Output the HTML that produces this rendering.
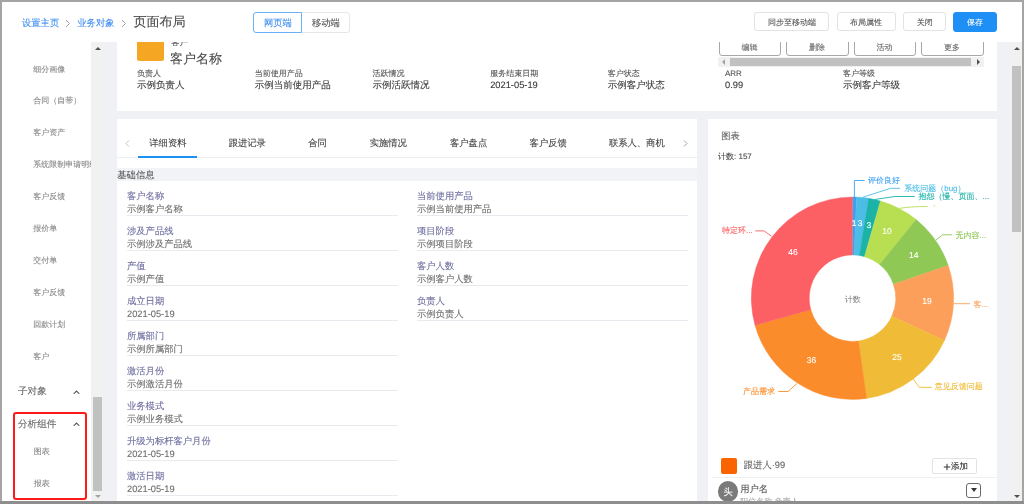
<!DOCTYPE html>
<html><head><meta charset="utf-8">
<style>
*{box-sizing:border-box;margin:0;padding:0}
html,body{width:1024px;height:504px;overflow:hidden;background:#fff;font-family:"Liberation Sans",sans-serif;position:relative;text-rendering:geometricPrecision}
.a{position:absolute;white-space:nowrap;line-height:1;-webkit-text-stroke-width:0.1px}
.btn{position:absolute;border:1px solid #e3e3e3;border-radius:3px;background:#fff}
.hl{position:absolute;height:1px;background:#e8eaf0}
#wrap{position:absolute;left:0;top:0;width:1024px;height:504px;will-change:transform;filter:blur(0.3px);overflow:hidden;background:#fff}
</style></head><body><div id="wrap">

<div class="a" style="left:22px;top:18.80px;font-size:9.3px;color:#3f8ef0;">设置主页</div>
<div class="a" style="left:77.3px;top:18.80px;font-size:9.3px;color:#3f8ef0;">业务对象</div>
<svg class="a" style="left:64.5px;top:18.7px" width="6" height="9" viewBox="0 0 6 9"><path d="M1 1L4.5 4.5L1 8" fill="none" stroke="#a0a0a0" stroke-width="1"/></svg>
<svg class="a" style="left:120.5px;top:18.7px" width="6" height="9" viewBox="0 0 6 9"><path d="M1 1L4.5 4.5L1 8" fill="none" stroke="#a0a0a0" stroke-width="1"/></svg>
<div class="a" style="left:133.5px;top:14.70px;font-size:13px;color:#4a4a4a;">页面布局</div>
<div class="btn" style="left:301px;top:11.5px;width:49px;height:21px;border-color:#e6e6e6;border-radius:0 3px 3px 0"></div>
<div class="btn" style="left:253px;top:11.5px;width:49px;height:21px;border-color:#69b0f7;border-radius:3px 0 0 3px"></div>
<div class="a" style="left:264px;top:18.80px;font-size:9.3px;color:#3f8ef0;">网页端</div>
<div class="a" style="left:312px;top:18.80px;font-size:9.3px;color:#555;">移动端</div>
<div class="btn" style="left:754.4px;top:12.4px;width:75.1px;height:19px"></div>
<div class="a" style="left:768px;top:19.00px;font-size:8px;color:#555;">同步至移动端</div>
<div class="btn" style="left:836.5px;top:12.4px;width:59.8px;height:19px"></div>
<div class="a" style="left:850px;top:19.00px;font-size:8px;color:#555;">布局属性</div>
<div class="btn" style="left:903px;top:12.4px;width:43.4px;height:19px"></div>
<div class="a" style="left:916.7px;top:19.00px;font-size:8px;color:#555;">关闭</div>
<div class="btn" style="left:953.2px;top:12.2px;width:44.2px;height:19.6px;background:#1d8ff5;border-color:#1d8ff5"></div>
<div class="a" style="left:967px;top:19.00px;font-size:8px;color:#fff;">保存</div>
<div class="a" style="left:103px;top:42px;width:919px;height:460px;background:#f0f1f4"></div>
<div class="a" style="left:91px;top:42px;width:12px;height:460px;background:#f1f1f1"></div>
<div class="a" style="left:93px;top:397px;width:9px;height:94px;background:#c1c1c1"></div>
<div class="a" style="left:94.5px;top:47px;width:0;height:0;border-left:3px solid transparent;border-right:3px solid transparent;border-bottom:3px solid #505050"></div>
<div class="a" style="left:94.5px;top:495px;width:0;height:0;border-left:3px solid transparent;border-right:3px solid transparent;border-top:3px solid #a3a3a3"></div>
<div class="a" style="left:2px;top:42px;width:89px;height:460px;overflow:hidden">
<div class="a" style="left:31.3px;top:23.50px;font-size:8px;color:#888;">细分画像</div>
<div class="a" style="left:31.3px;top:55.40px;font-size:8px;color:#888;">合同（自带）</div>
<div class="a" style="left:31.3px;top:87.30px;font-size:8px;color:#888;">客户资产</div>
<div class="a" style="left:31.3px;top:119.20px;font-size:8px;color:#888;">系统限制申请明细</div>
<div class="a" style="left:31.3px;top:151.10px;font-size:8px;color:#888;">客户反馈</div>
<div class="a" style="left:31.3px;top:183.00px;font-size:8px;color:#888;">报价单</div>
<div class="a" style="left:31.3px;top:214.90px;font-size:8px;color:#888;">交付单</div>
<div class="a" style="left:31.3px;top:246.80px;font-size:8px;color:#888;">客户反馈</div>
<div class="a" style="left:31.3px;top:278.70px;font-size:8px;color:#888;">回款计划</div>
<div class="a" style="left:31.3px;top:310.60px;font-size:8px;color:#888;">客户</div>
<div class="a" style="left:16px;top:345.30px;font-size:9.6px;color:#666;">子对象</div>
<div class="a" style="left:16px;top:377.90px;font-size:9.6px;color:#666;">分析组件</div>
<div class="a" style="left:31.7px;top:406.00px;font-size:8px;color:#888;">图表</div>
<div class="a" style="left:31.7px;top:437.50px;font-size:8px;color:#888;">报表</div>
</div>
<svg class="a" style="left:73px;top:389.8px" width="7" height="4.5" viewBox="0 0 7 4.5"><path d="M0.7 3.8L3.5 1L6.3 3.8" fill="none" stroke="#555" stroke-width="1.1"/></svg>
<svg class="a" style="left:73px;top:421.5px" width="7" height="4.5" viewBox="0 0 7 4.5"><path d="M0.7 3.8L3.5 1L6.3 3.8" fill="none" stroke="#555" stroke-width="1.1"/></svg>
<div class="a" style="left:13px;top:411.7px;width:74px;height:88px;border:2px solid #ff1a1a;border-radius:3px"></div>
<div class="a" style="left:117px;top:42px;width:880px;height:69px;background:#fff;overflow:hidden">
<div class="a" style="left:20px;top:-8px;width:26.6px;height:26.7px;background:#f5a623;border-radius:2.5px"></div>
<div class="a" style="left:54px;top:-4.00px;font-size:8.5px;color:#555;">客户</div>
<div class="a" style="left:53px;top:9.50px;font-size:13px;color:#4a4a4a;">客户名称</div>
<div class="a" style="left:20px;top:28.00px;font-size:8px;color:#555;">负责人</div>
<div class="a" style="left:20px;top:39.40px;font-size:9.5px;color:#3a3a3a;">示例负责人</div>
<div class="a" style="left:137.7px;top:28.00px;font-size:8px;color:#555;">当前使用产品</div>
<div class="a" style="left:137.7px;top:39.40px;font-size:9.5px;color:#3a3a3a;">示例当前使用产品</div>
<div class="a" style="left:255.5px;top:28.00px;font-size:8px;color:#555;">活跃情况</div>
<div class="a" style="left:255.5px;top:39.40px;font-size:9.5px;color:#3a3a3a;">示例活跃情况</div>
<div class="a" style="left:373.2px;top:28.00px;font-size:8px;color:#555;">服务结束日期</div>
<div class="a" style="left:373.2px;top:39.20px;font-size:9.3px;color:#3a3a3a;">2021-05-19</div>
<div class="a" style="left:490.70000000000005px;top:28.00px;font-size:8px;color:#555;">客户状态</div>
<div class="a" style="left:490.70000000000005px;top:39.40px;font-size:9.5px;color:#3a3a3a;">示例客户状态</div>
<div class="a" style="left:608px;top:28.00px;font-size:8px;color:#555;">ARR</div>
<div class="a" style="left:608px;top:39.20px;font-size:9.3px;color:#3a3a3a;">0.99</div>
<div class="a" style="left:726px;top:28.00px;font-size:8px;color:#555;">客户等级</div>
<div class="a" style="left:726px;top:39.40px;font-size:9.5px;color:#3a3a3a;">示例客户等级</div>
<div class="btn" style="left:601.5px;top:-6px;width:62.5px;height:19.5px;border-color:#a8a8a8;border-radius:0 0 3px 3px"></div>
<div class="a" style="left:624.5px;top:2.10px;font-size:8px;color:#666;">编辑</div>
<div class="btn" style="left:669.0px;top:-6px;width:62.5px;height:19.5px;border-color:#a8a8a8;border-radius:0 0 3px 3px"></div>
<div class="a" style="left:692.0px;top:2.10px;font-size:8px;color:#666;">删除</div>
<div class="btn" style="left:736.5px;top:-6px;width:62.5px;height:19.5px;border-color:#a8a8a8;border-radius:0 0 3px 3px"></div>
<div class="a" style="left:759.5px;top:2.10px;font-size:8px;color:#666;">活动</div>
<div class="btn" style="left:804.0px;top:-6px;width:62.5px;height:19.5px;border-color:#a8a8a8;border-radius:0 0 3px 3px"></div>
<div class="a" style="left:827.0px;top:2.10px;font-size:8px;color:#666;">更多</div>
<div class="a" style="left:601px;top:14.5px;width:266px;height:10px;background:#f1f1f1"></div>
<div class="a" style="left:612.5px;top:15.5px;width:241px;height:8px;background:#c1c1c1"></div>
<div class="a" style="left:605px;top:16.5px;width:0;height:0;border-top:3px solid transparent;border-bottom:3px solid transparent;border-right:3px solid #a3a3a3"></div>
<div class="a" style="left:859.5px;top:16.5px;width:0;height:0;border-top:3px solid transparent;border-bottom:3px solid transparent;border-left:3px solid #505050"></div>
</div>
<div class="a" style="left:117px;top:118.8px;width:579.5px;height:384px;background:#fff;overflow:hidden">
<svg class="a" style="left:8px;top:21.5px" width="5" height="7" viewBox="0 0 5 7"><path d="M4 0.5L1 3.5L4 6.5" fill="none" stroke="#bbb" stroke-width="0.9"/></svg>
<svg class="a" style="left:566px;top:21.3px" width="5" height="7" viewBox="0 0 5 7"><path d="M1 0.5L4 3.5L1 6.5" fill="none" stroke="#999" stroke-width="0.9"/></svg>
<div class="a" style="left:32.30000000000001px;top:20.20px;font-size:9.3px;color:#444;">详细资料</div>
<div class="a" style="left:111.69999999999999px;top:20.20px;font-size:9.3px;color:#444;">跟进记录</div>
<div class="a" style="left:191.3px;top:20.20px;font-size:9.3px;color:#444;">合同</div>
<div class="a" style="left:252.7px;top:20.20px;font-size:9.3px;color:#444;">实施情况</div>
<div class="a" style="left:333px;top:20.20px;font-size:9.3px;color:#444;">客户盘点</div>
<div class="a" style="left:412.6px;top:20.20px;font-size:9.3px;color:#444;">客户反馈</div>
<div class="a" style="left:491.9px;top:20.20px;font-size:9.3px;color:#444;">联系人、商机</div>
<div class="a" style="left:0;top:38.3px;width:580px;height:1px;background:#eceef2"></div>
<div class="a" style="left:21px;top:37.4px;width:59px;height:2.1px;background:#1d8ff5"></div>
<div class="a" style="left:0;top:49.6px;width:580px;height:12.8px;background:#f2f3f7"></div>
<div class="a" style="left:0.3px;top:52.40px;font-size:9.3px;color:#555;">基础信息</div>
<div class="a" style="left:10px;top:73.00px;font-size:9.3px;color:#6f6ea0;">客户名称</div>
<div class="a" style="left:10px;top:86.30px;font-size:9.3px;color:#6e6e6e;">示例客户名称</div>
<div class="hl" style="left:10px;top:96.2px;width:270.5px"></div>
<div class="a" style="left:10px;top:108.00px;font-size:9.3px;color:#6f6ea0;">涉及产品线</div>
<div class="a" style="left:10px;top:121.30px;font-size:9.3px;color:#6e6e6e;">示例涉及产品线</div>
<div class="hl" style="left:10px;top:131.2px;width:270.5px"></div>
<div class="a" style="left:10px;top:143.00px;font-size:9.3px;color:#6f6ea0;">产值</div>
<div class="a" style="left:10px;top:156.30px;font-size:9.3px;color:#6e6e6e;">示例产值</div>
<div class="hl" style="left:10px;top:166.2px;width:270.5px"></div>
<div class="a" style="left:10px;top:178.00px;font-size:9.3px;color:#6f6ea0;">成立日期</div>
<div class="a" style="left:10px;top:191.30px;font-size:9.3px;color:#6e6e6e;">2021-05-19</div>
<div class="hl" style="left:10px;top:201.2px;width:270.5px"></div>
<div class="a" style="left:10px;top:213.00px;font-size:9.3px;color:#6f6ea0;">所属部门</div>
<div class="a" style="left:10px;top:226.30px;font-size:9.3px;color:#6e6e6e;">示例所属部门</div>
<div class="hl" style="left:10px;top:236.2px;width:270.5px"></div>
<div class="a" style="left:10px;top:248.00px;font-size:9.3px;color:#6f6ea0;">激活月份</div>
<div class="a" style="left:10px;top:261.30px;font-size:9.3px;color:#6e6e6e;">示例激活月份</div>
<div class="hl" style="left:10px;top:271.2px;width:270.5px"></div>
<div class="a" style="left:10px;top:283.00px;font-size:9.3px;color:#6f6ea0;">业务模式</div>
<div class="a" style="left:10px;top:296.30px;font-size:9.3px;color:#6e6e6e;">示例业务模式</div>
<div class="hl" style="left:10px;top:306.2px;width:270.5px"></div>
<div class="a" style="left:10px;top:318.00px;font-size:9.3px;color:#6f6ea0;">升级为标杆客户月份</div>
<div class="a" style="left:10px;top:331.30px;font-size:9.3px;color:#6e6e6e;">2021-05-19</div>
<div class="hl" style="left:10px;top:341.2px;width:270.5px"></div>
<div class="a" style="left:10px;top:353.00px;font-size:9.3px;color:#6f6ea0;">激活日期</div>
<div class="a" style="left:10px;top:366.30px;font-size:9.3px;color:#6e6e6e;">2021-05-19</div>
<div class="hl" style="left:10px;top:376.2px;width:270.5px"></div>
<div class="a" style="left:300px;top:73.00px;font-size:9.3px;color:#6f6ea0;">当前使用产品</div>
<div class="a" style="left:300px;top:86.30px;font-size:9.3px;color:#6e6e6e;">示例当前使用产品</div>
<div class="hl" style="left:300px;top:96.2px;width:271px"></div>
<div class="a" style="left:300px;top:108.00px;font-size:9.3px;color:#6f6ea0;">项目阶段</div>
<div class="a" style="left:300px;top:121.30px;font-size:9.3px;color:#6e6e6e;">示例项目阶段</div>
<div class="hl" style="left:300px;top:131.2px;width:271px"></div>
<div class="a" style="left:300px;top:143.00px;font-size:9.3px;color:#6f6ea0;">客户人数</div>
<div class="a" style="left:300px;top:156.30px;font-size:9.3px;color:#6e6e6e;">示例客户人数</div>
<div class="hl" style="left:300px;top:166.2px;width:271px"></div>
<div class="a" style="left:300px;top:178.00px;font-size:9.3px;color:#6f6ea0;">负责人</div>
<div class="a" style="left:300px;top:191.30px;font-size:9.3px;color:#6e6e6e;">示例负责人</div>
<div class="hl" style="left:300px;top:201.2px;width:271px"></div>
</div>
<div class="a" style="left:707.5px;top:118.8px;width:289.6px;height:384px;background:#fff"></div>
<div class="a" style="left:721.2px;top:132.20px;font-size:9.3px;color:#666;">图表</div>
<div class="a" style="left:718px;top:153.00px;font-size:8px;color:#4a4a4a;">计数: 157</div>
<svg class="a" style="left:0;top:0" width="1024" height="504" viewBox="0 0 1024 504"><path d="M852.50 197.00A101.2 101.2 0 0 1 856.55 197.08L854.23 255.03A43.2 43.2 0 0 0 852.50 255.00Z" fill="#3aa1f5" stroke="#3aa1f5" stroke-width="0.4"/><path d="M856.55 197.08A101.2 101.2 0 0 1 868.63 198.29L859.39 255.55A43.2 43.2 0 0 0 854.23 255.03Z" fill="#4bbde6" stroke="#4bbde6" stroke-width="0.4"/><path d="M868.63 198.29A101.2 101.2 0 0 1 880.48 200.95L864.44 256.68A43.2 43.2 0 0 0 859.39 255.55Z" fill="#1bb3a7" stroke="#1bb3a7" stroke-width="0.4"/><path d="M880.48 200.95A101.2 101.2 0 0 1 916.16 219.53L879.68 264.62A43.2 43.2 0 0 0 864.44 256.68Z" fill="#b8de52" stroke="#b8de52" stroke-width="0.4"/><path d="M916.16 219.53A101.2 101.2 0 0 1 948.23 265.39L893.37 284.19A43.2 43.2 0 0 0 879.68 264.62Z" fill="#8fc855" stroke="#8fc855" stroke-width="0.4"/><path d="M948.23 265.39A101.2 101.2 0 0 1 944.48 340.41L891.76 316.22A43.2 43.2 0 0 0 893.37 284.19Z" fill="#fc9f5a" stroke="#fc9f5a" stroke-width="0.4"/><path d="M944.48 340.41A101.2 101.2 0 0 1 866.63 398.41L858.53 340.98A43.2 43.2 0 0 0 891.76 316.22Z" fill="#f0bc38" stroke="#f0bc38" stroke-width="0.4"/><path d="M866.63 398.41A101.2 101.2 0 0 1 754.97 325.21L810.87 309.73A43.2 43.2 0 0 0 858.53 340.98Z" fill="#fb8c2c" stroke="#fb8c2c" stroke-width="0.4"/><path d="M754.97 325.21A101.2 101.2 0 0 1 852.50 197.00L852.50 255.00A43.2 43.2 0 0 0 810.87 309.73Z" fill="#fc6065" stroke="#fc6065" stroke-width="0.4"/><path d="M854.4 197V180.5H864.6" fill="none" stroke="#3aa1f5" stroke-width="0.9"/><path d="M862.9 197.2L890.5 188.3H899.9" fill="none" stroke="#4bbde6" stroke-width="0.9"/><path d="M874.5 199.5L895 196.5H914.8" fill="none" stroke="#1bb3a7" stroke-width="0.9"/><path d="M899.5 208.4Q910 206.5 927.7 206.5" fill="none" stroke="#b8de52" stroke-width="0.9"/><path d="M936 240L942.6 234.8H952.3" fill="none" stroke="#8fc855" stroke-width="0.9"/><path d="M954 303.7H970" fill="none" stroke="#fc9f5a" stroke-width="0.9"/><path d="M913 378.6L919.2 387.3H932" fill="none" stroke="#f0bc38" stroke-width="0.9"/><path d="M796.6 383.8L788.1 391.5H778.3" fill="none" stroke="#fb8c2c" stroke-width="0.9"/><path d="M771.6 236.3L764.1 230.9H755.2" fill="none" stroke="#fc6065" stroke-width="0.9"/><text x="854.0" y="225.7" font-size="8.5" fill="#fff" stroke="#fff" stroke-width="0.1" text-anchor="middle" font-family="Liberation Sans">1</text><text x="860.0" y="226.1" font-size="8.5" fill="#fff" stroke="#fff" stroke-width="0.1" text-anchor="middle" font-family="Liberation Sans">3</text><text x="868.8" y="227.5" font-size="8.5" fill="#fff" stroke="#fff" stroke-width="0.1" text-anchor="middle" font-family="Liberation Sans">3</text><text x="887.0" y="234.1" font-size="8.5" fill="#fff" stroke="#fff" stroke-width="0.1" text-anchor="middle" font-family="Liberation Sans">10</text><text x="913.7" y="257.6" font-size="8.5" fill="#fff" stroke="#fff" stroke-width="0.1" text-anchor="middle" font-family="Liberation Sans">14</text><text x="927.1" y="304.1" font-size="8.5" fill="#fff" stroke="#fff" stroke-width="0.1" text-anchor="middle" font-family="Liberation Sans">19</text><text x="897.1" y="360.3" font-size="8.5" fill="#fff" stroke="#fff" stroke-width="0.1" text-anchor="middle" font-family="Liberation Sans">25</text><text x="811.5" y="362.9" font-size="8.5" fill="#fff" stroke="#fff" stroke-width="0.1" text-anchor="middle" font-family="Liberation Sans">36</text><text x="793.0" y="255.2" font-size="8.5" fill="#fff" stroke="#fff" stroke-width="0.1" text-anchor="middle" font-family="Liberation Sans">46</text><text x="852.8" y="301.6" font-size="8" fill="#777" text-anchor="middle">计数</text><text x="933" y="208" font-size="8" fill="#b8de52">-</text></svg>
<div class="a" style="left:868px;top:176.80px;font-size:8px;color:#3aa1f5;">评价良好</div>
<div class="a" style="left:904.2px;top:185.00px;font-size:8px;color:#4bbde6;">系统问题（bug）</div>
<div class="a" style="left:918.5px;top:192.80px;font-size:8px;color:#1bb3a7;">抱怨（慢、页面、...</div>
<div class="a" style="left:955.5px;top:231.50px;font-size:8px;color:#8fc855;">无内容...</div>
<div class="a" style="left:973.5px;top:301.00px;font-size:8px;color:#fc9f5a;">客...</div>
<div class="a" style="left:934.7px;top:383.20px;font-size:8px;color:#f0bc38;">意见反馈问题</div>
<div class="a" style="left:742.9px;top:387.80px;font-size:8px;color:#fb8c2c;">产品需求</div>
<div class="a" style="left:722px;top:227.40px;font-size:8px;color:#fc6065;">特定环...</div>
<div class="a" style="left:720.8px;top:457.6px;width:16.2px;height:16.1px;background:#fa6400;border-radius:2px"></div>
<div class="a" style="left:743.8px;top:461.00px;font-size:9.3px;color:#666;">跟进人·99</div>
<div class="btn" style="left:932px;top:457.8px;width:45px;height:16.7px;border-color:#e3e3e3;border-radius:2px"></div>
<svg class="a" style="left:942.5px;top:463px" width="8" height="8" viewBox="0 0 8 8"><path d="M4 0.8V7.2M0.8 4H7.2" stroke="#333" stroke-width="1"/></svg>
<div class="a" style="left:951px;top:462.00px;font-size:8.5px;color:#333;">添加</div>
<div class="a" style="left:712px;top:477px;width:285px;height:1px;background:#eef0f3"></div>
<div class="a" style="left:717.9px;top:481px;width:20.5px;height:20.5px;border-radius:50%;background:#7a7a7a"></div>
<div class="a" style="left:723.5px;top:487.80px;font-size:9.3px;color:#fff;">头</div>
<div class="a" style="left:740.2px;top:484.50px;font-size:9.3px;color:#555;">用户名</div>
<div class="a" style="left:740.2px;top:498.00px;font-size:8px;color:#aaa;">职位名称·负责人</div>
<div class="a" style="left:966.3px;top:482.5px;width:15px;height:15px;border:1px solid #6a6a6a;border-radius:3px;background:#fff"></div>
<div class="a" style="left:971px;top:488.3px;width:0;height:0;border-left:3.3px solid transparent;border-right:3.3px solid transparent;border-top:4.2px solid #333"></div>
<div class="a" style="left:1011px;top:42px;width:11px;height:460px;background:#f1f1f1"></div>
<div class="a" style="left:1012px;top:66.4px;width:9px;height:165.3px;background:#c1c1c1"></div>
<div class="a" style="left:1013.5px;top:47px;width:0;height:0;border-left:3px solid transparent;border-right:3px solid transparent;border-bottom:3px solid #505050"></div>
<div class="a" style="left:1013.5px;top:495px;width:0;height:0;border-left:3px solid transparent;border-right:3px solid transparent;border-top:3px solid #505050"></div>
<div class="a" style="left:0;top:0;width:1024px;height:2px;background:#a5a5a5;z-index:50"></div>
<div class="a" style="left:0;top:0;width:2px;height:504px;background:#a5a5a5;z-index:50"></div>
<div class="a" style="left:1022px;top:0;width:2px;height:504px;background:#a5a5a5;z-index:50"></div>
<div class="a" style="left:0;top:501px;width:1024px;height:3px;background:#8e8e8e;z-index:50"></div>
</div></body></html>
